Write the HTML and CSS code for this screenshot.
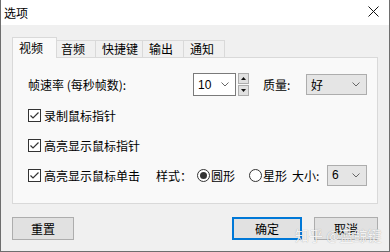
FILE: index.html
```html
<!DOCTYPE html>
<html lang="zh-CN">
<head>
<meta charset="utf-8">
<title>选项</title>
<link rel="stylesheet" href="styles.css">
</head>
<body>
<div class="window">
  <div class="titlebar">
    <span class="title">选项</span>
    <svg class="close" width="11" height="11" viewBox="0 0 11 11"><path d="M0.5 0.5 L10.5 10.5 M10.5 0.5 L0.5 10.5" stroke="#111" stroke-width="1" fill="none"/></svg>
  </div>
  <div class="client">
    <div class="tabs">
      <div class="tab active">视频</div>
      <div class="tab">音频</div>
      <div class="tab">快捷键</div>
      <div class="tab">输出</div>
      <div class="tab">通知</div>
    </div>
    <div class="panel">
      <div class="row row-first">
        <span class="label-fps">帧速率 (每秒帧数):</span>
        <div class="combo combo-edit combo-fps">
          <span class="combo-text">10</span>
          <svg class="chev" width="8" height="5" viewBox="0 0 8 5"><polyline points="0.5,0.5 4,4 7.5,0.5" stroke="#666" fill="none"/></svg>
        </div>
        <div class="spin">
          <div class="spin-btn"><svg width="5" height="3" viewBox="0 0 5 3"><polygon points="2.5,0 5,3 0,3" fill="#111"/></svg></div>
          <div class="spin-btn"><svg width="5" height="3" viewBox="0 0 5 3"><polygon points="0,0 5,0 2.5,3" fill="#111"/></svg></div>
        </div>
        <span class="label-quality">质量:</span>
        <div class="combo combo-ro combo-quality">
          <span class="combo-text">好</span>
          <svg class="chev" width="8" height="5" viewBox="0 0 8 5"><polyline points="0.5,0.5 4,4 7.5,0.5" stroke="#666" fill="none"/></svg>
        </div>
      </div>
      <div class="row">
        <svg class="check" width="13" height="13" viewBox="0 0 13 13"><rect x="0.5" y="0.5" width="12" height="12" fill="#fff" stroke="#333"/><path d="M2.5 6.5 L5 9 L10.5 3.5" stroke="#333" stroke-width="1.2" fill="none"/></svg>
        <span class="cb-text">录制鼠标指针</span>
      </div>
      <div class="row">
        <svg class="check" width="13" height="13" viewBox="0 0 13 13"><rect x="0.5" y="0.5" width="12" height="12" fill="#fff" stroke="#333"/><path d="M2.5 6.5 L5 9 L10.5 3.5" stroke="#333" stroke-width="1.2" fill="none"/></svg>
        <span class="cb-text">高亮显示鼠标指针</span>
      </div>
      <div class="row">
        <svg class="check" width="13" height="13" viewBox="0 0 13 13"><rect x="0.5" y="0.5" width="12" height="12" fill="#fff" stroke="#333"/><path d="M2.5 6.5 L5 9 L10.5 3.5" stroke="#333" stroke-width="1.2" fill="none"/></svg>
        <span class="cb-text">高亮显示鼠标单击</span>
        <span class="label-style">样式：</span>
        <svg class="radio" width="13" height="13" viewBox="0 0 13 13"><circle cx="6.5" cy="6.5" r="6" fill="#fff" stroke="#333"/><circle cx="6.5" cy="6.5" r="3.5" fill="#333"/></svg>
        <span class="radio-text">圆形</span>
        <svg class="radio radio-2" width="13" height="13" viewBox="0 0 13 13"><circle cx="6.5" cy="6.5" r="6" fill="#fff" stroke="#333"/></svg>
        <span class="radio-text">星形</span>
        <span class="label-size">大小:</span>
        <div class="combo combo-ro combo-size">
          <span class="combo-text">6</span>
          <svg class="chev" width="8" height="5" viewBox="0 0 8 5"><polyline points="0.5,0.5 4,4 7.5,0.5" stroke="#666" fill="none"/></svg>
        </div>
      </div>
    </div>
    <div class="buttons">
      <button class="btn btn-reset">重置</button>
      <div class="btn-right">
        <button class="btn btn-ok">确定</button>
        <button class="btn btn-cancel">取消</button>
      </div>
    </div>
    <span class="watermark">知乎 @蓝鲸键</span>
  </div>
</div>
</body>
</html>
```
FILE: styles.css
```css
* { box-sizing: border-box; }
html, body { margin: 0; padding: 0; }
body {
  width: 390px;
  height: 252px;
  overflow: hidden;
  font-family: "Noto Sans CJK SC", "Microsoft YaHei", sans-serif;
  font-size: 12px;
  color: #000;
  background: #fff;
}
.window {
  width: 390px;
  height: 252px;
  display: flex;
  flex-direction: column;
  border-left: 1px solid #6e6e6e;
  border-right: 1px solid #6e6e6e;
  border-bottom: 1px solid #6e6e6e;
}
.titlebar {
  height: 25px;
  flex: none;
  background: #fff;
  display: flex;
  align-items: center;
  justify-content: space-between;
  padding: 0 10px 0 3px;
}
.title { line-height: 25px; }
.close { display: block; margin-top: -2px; }
.client {
  flex: 1;
  background: #f0f0f0;
  position: relative;
  display: flex;
  flex-direction: column;
}
.tabs {
  display: flex;
  align-items: flex-end;
  height: 20px;
  margin: 12px 0 0 11px;
  padding-left: 2px;
}
.tab {
  height: 17px;
  min-width: 41px;
  padding: 0 4px 0 6px;
  border: 1px solid #d9d9d9;
  border-bottom: none;
  border-left: none;
  background: #f0f0f0;
  line-height: 16px;
  white-space: nowrap;
}
.tab:nth-child(2) { border-left: none; }
.tab.active {
  height: 21px;
  min-width: 45px;
  margin: 0 -2px -1px -2px;
  border-left: 1px solid #d9d9d9;
  border-right: 1px solid #d9d9d9;
  background: #f9f9f9;
  position: relative;
  z-index: 1;
  line-height: 20px;
}
.panel {
  margin-left: 11px;
  width: 366px;
  height: 147px;
  border: 1px solid #d9d9d9;
  background: #f9f9f9;
  padding: 15px 0 0 15px;
  display: flex;
  flex-direction: column;
  gap: 8px;
}
.row {
  display: flex;
  align-items: center;
  height: 22px;
  white-space: nowrap;
}
.row-first { height: 23px; }
.label-fps { width: 165px; }
.combo {
  display: flex;
  align-items: center;
  justify-content: space-between;
  padding: 0 6px 0 4px;
}
.combo-edit {
  background: #fff;
  border: 1px solid #7a7a7a;
  height: 23px;
}
.combo-ro {
  background: #e5e5e5;
  border: 1px solid #adadad;
  height: 21px;
}
.combo-fps { width: 43px; }
.combo-text { line-height: 16px; font-family: "Liberation Sans", "Noto Sans CJK SC", sans-serif; font-size: 12px; }
.combo-quality .combo-text { font-family: "Noto Sans CJK SC", sans-serif; }
.chev { display: block; }
.spin {
  margin-left: 2px;
  width: 11px;
  height: 23px;
  display: flex;
  flex-direction: column;
  gap: 1px;
}
.spin-btn {
  flex: 1;
  background: #e1e1e1;
  border: 1px solid #adadad;
  display: flex;
  align-items: center;
  justify-content: center;
}
.spin-btn svg { display: block; }
.label-quality { margin-left: 14px; width: 43px; }
.combo-quality { width: 61px; }
.check, .radio { display: block; flex: none; }
.cb-text { margin-left: 3px; }
.label-style { margin-left: 16px; }
.radio { margin-left: 5px; }
.radio-2 { margin-left: 14px; }
.radio-text { margin-left: 1px; }
.label-size { margin-left: 5px; width: 35px; }
.combo-size { width: 40px; }
.buttons {
  display: flex;
  justify-content: space-between;
  margin: 13px 0 0 11px;
  width: 366px;
}
.btn-right { display: flex; gap: 12px; }
.btn {
  font-family: "Noto Sans CJK SC", sans-serif;
  font-size: 12px;
  color: #000;
  height: 23px;
  background: #e1e1e1;
  border: 1px solid #adadad;
  padding: 0;
  margin: 0;
  line-height: 20px;
}
.btn-reset { width: 62px; }
.btn-ok { width: 70px; border: 2px solid #0078d7; }
.btn-cancel { width: 64px; }
.watermark {
  position: absolute;
  left: 294px;
  top: 200px;
  font-size: 14px;
  color: rgba(255, 255, 255, 0.9);
  text-shadow: 0 0 1px rgba(0, 0, 0, 0.35);
  white-space: nowrap;
  pointer-events: none;
}
```
